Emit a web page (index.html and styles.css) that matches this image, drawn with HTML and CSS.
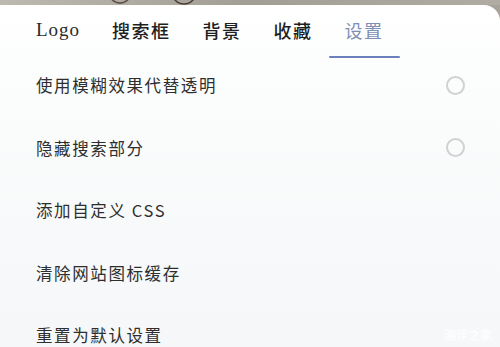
FILE: index.html
```html
<!DOCTYPE html>
<html lang="zh-CN">
<head>
<meta charset="utf-8">
<link rel="stylesheet" href="styles.css">
</head>
<body>
<div class="strip">
  <svg class="strip-art" width="500" height="6" viewBox="0 0 500 6"><circle cx="120" cy="-8" r="11" fill="none" stroke="#5a4a40" stroke-width="1.5"/><circle cx="184" cy="-8" r="12" fill="none" stroke="#4a3f38" stroke-width="1.5"/></svg>
</div>
<div class="card">
  <nav class="tabs">
    <div class="tab latin">Logo</div>
    <div class="tab">搜索框</div>
    <div class="tab">背景</div>
    <div class="tab">收藏</div>
    <div class="tab active">设置</div>
  </nav>
  <ul class="list">
    <li class="row"><span class="label">使用模糊效果代替透明</span><span class="radio"></span></li>
    <li class="row"><span class="label">隐藏搜索部分</span><span class="radio"></span></li>
    <li class="row"><span class="label">添加自定义 CSS</span></li>
    <li class="row"><span class="label">清除网站图标缓存</span></li>
    <li class="row"><span class="label">重置为默认设置</span></li>
  </ul>
  <div class="mark">测评之家</div>
</div>
</body>
</html>
```

FILE: styles.css
```css
html, body {
  margin: 0;
  padding: 0;
  height: 100%;
  overflow: hidden;
}
body {
  background: #a7a39b;
  font-family: "Liberation Serif", "Noto Sans CJK SC", serif;
}
.strip {
  height: 5px;
  background: linear-gradient(90deg, #bdb9b1 0%, #a29e95 50%, #b0aca4 100%);
  overflow: hidden;
}
.strip-art {
  display: block;
}
.card {
  position: relative;
  height: 342px;
  overflow: hidden;
  background: linear-gradient(180deg, #ffffff 0%, #fbfcfc 25%, #f5f7f8 100%);
  border-radius: 0 16px 0 0;
}
.tabs {
  display: flex;
  padding: 0 0 0 20px;
  height: 53px;
}
.tab {
  position: relative;
  padding: 0 16px;
  font-family: "Noto Sans CJK SC", serif;
  font-size: 18px;
  font-weight: 500;
  letter-spacing: 1.5px;
  color: #1f1f1f;
  line-height: 50px;
}
.tab.latin {
  font-family: "Liberation Serif", serif;
  font-size: 19px;
  font-weight: 400;
  letter-spacing: 1px;
  color: #2a2a2a;
}
.tab.active {
  color: #7d8fb4;
  font-weight: 400;
}
.tab.active::after {
  content: "";
  position: absolute;
  left: 0;
  right: 0;
  bottom: 0;
  height: 2px;
  background: #6d7fbd;
  border-radius: 1px;
}
.list {
  list-style: none;
  margin: 0;
  padding: 0;
}
.row {
  display: flex;
  align-items: center;
  justify-content: space-between;
  height: 62.5px;
  padding: 0 36px;
}
.row:first-child {
  margin-top: -4px;
}
.label {
  font-family: "Noto Sans CJK SC", serif;
  font-size: 16.5px;
  letter-spacing: 1.6px;
  color: #2e2e2e;
}
.radio {
  width: 15px;
  height: 15px;
  border: 2px solid #cfd1d2;
  border-radius: 50%;
  margin-right: -1px;
}
.mark {
  position: absolute;
  right: 8px;
  bottom: 4px;
  font-family: "Noto Sans CJK SC", sans-serif;
  font-size: 12px;
  font-weight: 700;
  color: rgba(255, 255, 255, 0.8);
}
```
